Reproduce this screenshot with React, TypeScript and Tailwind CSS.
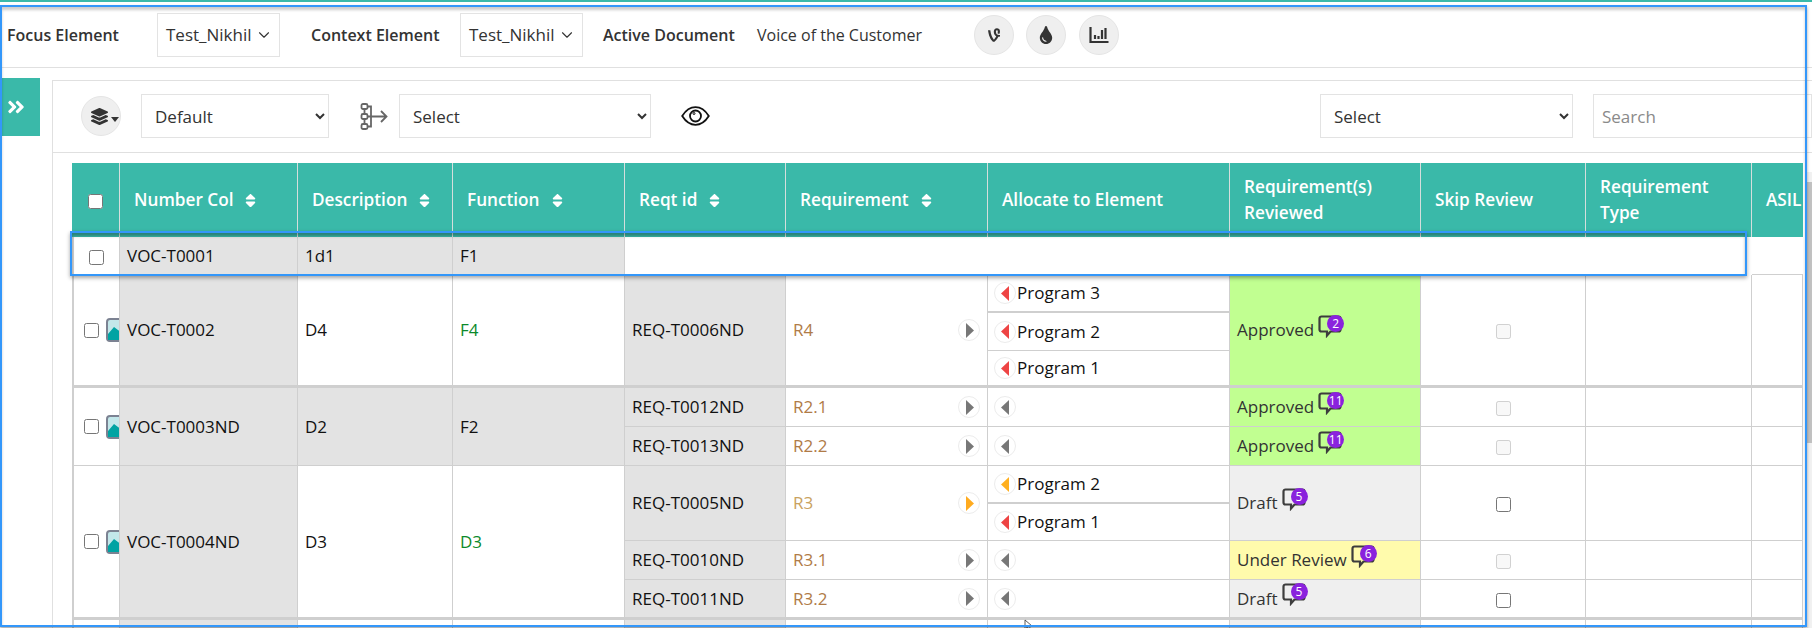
import { FaVine, FaTint, FaLayerGroup, FaAngleDoubleRight, FaSort } from 'react-icons/fa'
import { FiChevronDown } from 'react-icons/fi'
import type { ReactNode } from 'react'

const line = 'border-r border-b border-[#cfcfcf]'

function CircleBtn({ children }: { children: ReactNode }) {
  return (
    <div className="w-10 h-10 rounded-full bg-[#efefef] border border-[#e5e5e5] flex items-center justify-center text-[#333]">
      {children}
    </div>
  )
}

function ElementBox() {
  return (
    <div className="w-[123px] h-[44px] border border-[#e3e3e3] flex items-center pl-[8px] text-[17px] text-[#333] shrink-0">
      Test_Nikhil
      <FiChevronDown className="ml-[3px] text-[#333]" size={18} strokeWidth={1.5} />
    </div>
  )
}

function Bubble({ n }: { n: number }) {
  return (
    <span className="relative inline-block w-[28px] h-[23px] ml-[4px] -mt-[8px] shrink-0">
      <svg width="25" height="23" viewBox="0 0 25 23" fill="none" className="text-[#3d3d3d]">
        <path d="M3.500 1.500h17a2 2 0 0 1 2 2v11a2 2 0 0 1-2 2h-8l-3.500 4v-4h-5.500a2 2 0 0 1-2-2v-11a2 2 0 0 1 2-2z" stroke="currentColor" strokeWidth="2.200" />
      </svg>
      <span className="absolute left-[9px] top-0 w-[17px] h-[17px] rounded-full bg-[#8a22dd] text-white text-[12px] leading-[17px] text-center">
        {n}
      </span>
    </span>
  )
}

function Arrow({ dir, color }: { dir: 'left' | 'right'; color: string }) {
  return (
    <span className="w-[22px] h-[22px] rounded-full border border-[#ececec] bg-white flex items-center justify-center shrink-0">
      <svg width="9" height="15" viewBox="0 0 9 15">
        <polygon points={dir === 'left' ? '8,0 8,15 0,7.500' : '1,0 1,15 9,7.500'} fill={color} />
      </svg>
    </span>
  )
}

function ImageIcon() {
  return (
    <svg width="24" height="24" viewBox="0 0 24 24" className="shrink-0">
      <rect x="1" y="1" width="22" height="22" rx="3" fill="#c3e7ea" stroke="#7c8292" strokeWidth="2" />
      <polygon points="2,21 2,16 8,9 16,15 22,15 22,22 2,22" fill="#00a3a3" />
    </svg>
  )
}

function HeadCell({ children, sort, last }: { children: ReactNode; sort?: boolean; last?: boolean }) {
  return (
    <th className={`h-[74px] px-[14px] py-0 text-left align-middle font-semibold text-[17.200px] leading-[26px] text-white ${last ? '' : 'border-r border-[#d5dedc]'}`}>
      <span className="flex items-center whitespace-pre-line">
        {children}
        {sort && <FaSort className="ml-[9px] shrink-0" size={17} />}
      </span>
    </th>
  )
}

function Td({ children, bg, span, className = '' }: { children?: ReactNode; bg?: string; span?: number; className?: string }) {
  return (
    <td rowSpan={span} className={`${line} ${bg ?? 'bg-white'} px-[7px] py-0 align-middle ${className}`}>
      {children}
    </td>
  )
}

function Pick({ span, className = '' }: { span?: number; className?: string }) {
  return (
    <td rowSpan={span} className={`${line} border-l-2 overflow-hidden p-0 bg-white ${className}`}>
      <div className="flex items-center pl-[10px] gap-[7px] w-[60px]">
        <input type="checkbox" readOnly className="w-[15px] h-[15px] shrink-0" />
        <ImageIcon />
      </div>
    </td>
  )
}

function Program({ name, color, h, rule }: { name: string; color: string; h: string; rule?: string }) {
  return (
    <div className={`${h} ${rule ?? ''} flex items-center pl-[6px] text-[17px] text-[#111]`}>
      <Arrow dir="left" color={color} />
      <span className="ml-[1px]">{name}</span>
    </div>
  )
}

function Review({ label, n, bg, className = '' }: { label: string; n: number; bg: string; className?: string }) {
  return (
    <td className={`${line} ${bg} px-[7px] py-0 align-middle text-[#333] ${className}`}>
      <span className="flex items-center">
        {label}
        <Bubble n={n} />
      </span>
    </td>
  )
}

function ReqName({ name, color = 'text-[#b07b47]', arrow = '#777777', className = '' }: { name: string; color?: string; arrow?: string; className?: string }) {
  return (
    <td className={`${line} bg-white pl-[7px] pr-[7px] py-0 align-middle ${className}`}>
      <span className="flex items-center justify-between">
        <span className={color}>{name}</span>
        <Arrow dir="right" color={arrow} />
      </span>
    </td>
  )
}

function Skip({ disabled, className = '' }: { disabled?: boolean; className?: string }) {
  return (
    <td className={`${line} bg-white p-0 text-center align-middle ${className}`}>
      <input type="checkbox" disabled={disabled} readOnly className="w-[15px] h-[15px] align-middle" />
    </td>
  )
}

function EmptyAlloc({ className = '' }: { className?: string }) {
  return (
    <td className={`${line} bg-white py-0 pl-[6px] align-middle ${className}`}>
      <Arrow dir="left" color="#777777" />
    </td>
  )
}

const grey = 'bg-[#e3e3e3]'

export default function App() {
  return (
    <div className="relative w-[1812px] h-[628px] overflow-hidden bg-white font-['Open_Sans',sans-serif] text-[17px] text-[#111]">
      <div className="h-[2px] bg-[#3ab9a9]" />
      <div className="h-[5px]" />

      <div className="h-[61px] pb-[5px] border-b border-[#e0e0e0] flex items-center">
        <div className="w-[157px] pl-[7px] text-[16px] font-semibold text-[#333] shrink-0">Focus Element</div>
        <ElementBox />
        <div className="w-[150px] ml-[31px] -mr-[1px] text-[16px] font-semibold text-[#333] shrink-0">Context Element</div>
        <ElementBox />
        <div className="w-[154px] ml-[20px] text-[16px] font-semibold text-[#333] shrink-0">Active Document</div>
        <div className="w-[217px] text-[16px] text-[#333] shrink-0">Voice of the Customer</div>
        <CircleBtn><FaVine size={16} /></CircleBtn>
        <div className="w-3" />
        <CircleBtn><FaTint size={18} /></CircleBtn>
        <div className="w-[13px]" />
        <CircleBtn>
          <svg width="20" height="18" viewBox="0 0 20 18" fill="none" stroke="#333">
            <path d="M1.500 1v15h18" strokeWidth="2.200" />
            <path d="M6 13V9M9.500 13V10M13 13V4M16.500 13V2" strokeWidth="2.200" />
          </svg>
        </CircleBtn>
      </div>

      <div className="flex">
        <div className="w-[38px] h-[58px] mt-[10px] ml-[2px] bg-[#3ab9a9] flex items-center justify-start pl-[4px] text-white shrink-0">
          <FaAngleDoubleRight size={20} />
        </div>
        <div className="ml-[12px] mt-[12px] w-[1760px] border-l border-t border-[#e0e0e0] shrink-0">
          <div className="h-[72px] pb-[1px] border-b border-[#e0e0e0] flex items-center pl-[28px] text-[#333]">
            <div className="relative w-10 h-10 rounded-full bg-[#efefef] border border-[#e5e5e5] flex items-center justify-center shrink-0">
              <FaLayerGroup size={17} className="-ml-[3px]" />
              <svg width="8" height="5" viewBox="0 0 8 5" className="absolute right-[1px] top-[20px]">
                <polygon points="0,0 8,0 4,5" fill="#333" />
              </svg>
            </div>
            <select className="ml-[20px] w-[188px] h-[44px] border border-[#e3e3e3] bg-white pl-[9px] text-[17px] text-[#333] shrink-0">
              <option>Default</option>
            </select>
            <svg width="28" height="27" viewBox="0 0 28 27" fill="none" stroke="#666" strokeWidth="1.800" className="ml-[31px] shrink-0">
              <rect x="1.500" y="1" width="6" height="5" rx="1.500" />
              <rect x="1.500" y="11" width="6" height="5" rx="1.500" />
              <rect x="1.500" y="21" width="6" height="5" rx="1.500" />
              <path d="M4.500 6v5M4.500 16v5M7.500 13.500H26.500M21 8l5.500 5.500L21 19M7.500 3.500h3.500v20H7.500" />
            </svg>
            <select className="ml-[11px] w-[252px] h-[44px] border border-[#e3e3e3] bg-white pl-[9px] text-[17px] text-[#333] shrink-0">
              <option>Select</option>
            </select>
            <svg width="29" height="20" viewBox="0 0 29 20" fill="none" stroke="#111" strokeWidth="1.800" className="ml-[30px] shrink-0">
              <path d="M1.200 10C5 4 9.500 1.200 14.500 1.200S24 4 27.800 10C24 16 19.500 18.800 14.500 18.800S5 16 1.200 10z" />
              <circle cx="14.500" cy="10" r="5.500" />
              <circle cx="13" cy="7.500" r="1" strokeWidth="1" />
            </svg>
            <select className="ml-auto w-[253px] h-[44px] border border-[#e3e3e3] bg-white pl-[9px] text-[17px] text-[#333] shrink-0">
              <option>Select</option>
            </select>
            <input placeholder="Search" className="ml-[20px] w-[219px] h-[44px] border border-[#e3e3e3] pl-[8px] text-[17px] placeholder:text-[#8a8a8a] shrink-0" />
          </div>

          <div className="pt-[10px] pl-[19px]">
            <table className="table-fixed w-[1731px] border-separate border-spacing-0 text-[#111]">
              <colgroup>
                <col className="w-[48px]" />
                <col className="w-[178px]" />
                <col className="w-[155px]" />
                <col className="w-[172px]" />
                <col className="w-[161px]" />
                <col className="w-[202px]" />
                <col className="w-[242px]" />
                <col className="w-[191px]" />
                <col className="w-[165px]" />
                <col className="w-[166px]" />
                <col className="w-[51px]" />
              </colgroup>
              <thead className="bg-[#3ab9a9]">
                <tr>
                  <th className="h-[74px] border-r border-[#d5dedc] p-0 text-center align-middle">
                    <input type="checkbox" readOnly className="w-[15px] h-[15px] align-middle" />
                  </th>
                  <HeadCell sort>Number Col</HeadCell>
                  <HeadCell sort>Description</HeadCell>
                  <HeadCell sort>Function</HeadCell>
                  <HeadCell sort>Reqt id</HeadCell>
                  <HeadCell sort>Requirement</HeadCell>
                  <HeadCell>Allocate to Element</HeadCell>
                  <HeadCell>Requirement(s){'\n'}Reviewed</HeadCell>
                  <HeadCell>Skip Review</HeadCell>
                  <HeadCell>Requirement{'\n'}Type</HeadCell>
                  <HeadCell last>ASIL</HeadCell>
                </tr>
              </thead>
              <tbody>
                <tr className="h-[38px]">
                  <td className="border-b border-r border-l-2 border-[#cfcfcf] bg-white p-0 text-center align-middle">
                    <input type="checkbox" readOnly className="w-[15px] h-[15px] align-middle" />
                  </td>
                  <Td bg={grey}>VOC-T0001</Td>
                  <Td bg={grey}>1d1</Td>
                  <Td bg={grey}>F1</Td>
                  <td colSpan={6} className="bg-white" />
                  <td className="border-b border-[#cfcfcf] bg-white" />
                </tr>

                <tr className="h-[113px]">
                  <Pick className="border-b-[3px]" />
                  <Td bg={grey} className="border-b-[3px]">VOC-T0002</Td>
                  <Td className="border-b-[3px]">D4</Td>
                  <Td className="border-b-[3px] text-[#0b8a2b]">F4</Td>
                  <Td bg={grey} className="border-b-[3px]">REQ-T0006ND</Td>
                  <ReqName name="R4" className="border-b-[3px]" />
                  <td className={`${line} border-b-[3px] bg-white p-0 align-top`}>
                    <Program name="Program 3" color="#ee4444" h="h-[38px]" rule="border-b-2 border-[#cfcfcf]" />
                    <Program name="Program 2" color="#ee4444" h="h-[38px]" rule="border-b border-[#cfcfcf]" />
                    <Program name="Program 1" color="#ee4444" h="h-[34px]" />
                  </td>
                  <Review label="Approved" n={2} bg="bg-[#c1ff91]" className="border-b-[3px]" />
                  <Skip disabled className="border-b-[3px]" />
                  <Td className="border-b-[3px]" />
                  <Td className="border-b-[3px]" />
                </tr>

                <tr className="h-[39px]">
                  <Pick span={2} />
                  <Td bg={grey} span={2}>VOC-T0003ND</Td>
                  <Td bg={grey} span={2}>D2</Td>
                  <Td bg={grey} span={2}>F2</Td>
                  <Td bg={grey}>REQ-T0012ND</Td>
                  <ReqName name="R2.1" />
                  <EmptyAlloc />
                  <Review label="Approved" n={11} bg="bg-[#c1ff91]" />
                  <Skip disabled />
                  <Td />
                  <Td />
                </tr>
                <tr className="h-[39px]">
                  <Td bg={grey}>REQ-T0013ND</Td>
                  <ReqName name="R2.2" />
                  <EmptyAlloc />
                  <Review label="Approved" n={11} bg="bg-[#c1ff91]" />
                  <Skip disabled />
                  <Td />
                  <Td />
                </tr>

                <tr className="h-[75px]">
                  <Pick span={3} className="border-b-[3px]" />
                  <Td bg={grey} span={3} className="border-b-[3px]">VOC-T0004ND</Td>
                  <Td span={3} className="border-b-[3px]">D3</Td>
                  <Td span={3} className="border-b-[3px] text-[#0b8a2b]">D3</Td>
                  <Td bg={grey}>REQ-T0005ND</Td>
                  <ReqName name="R3" color="text-[#c9a25f]" arrow="#ffab1f" />
                  <td className={`${line} bg-white p-0 align-top`}>
                    <Program name="Program 2" color="#ffb020" h="h-[38px]" rule="border-b-2 border-[#cfcfcf]" />
                    <Program name="Program 1" color="#ee4444" h="h-[36px]" />
                  </td>
                  <Review label="Draft" n={5} bg="bg-[#efefef]" />
                  <Skip />
                  <Td />
                  <Td />
                </tr>
                <tr className="h-[39px]">
                  <Td bg={grey}>REQ-T0010ND</Td>
                  <ReqName name="R3.1" />
                  <EmptyAlloc />
                  <Review label="Under Review" n={6} bg="bg-[#fffbac]" />
                  <Skip disabled />
                  <Td />
                  <Td />
                </tr>
                <tr className="h-[40px]">
                  <Td bg={grey} className="border-b-[3px]">REQ-T0011ND</Td>
                  <ReqName name="R3.2" className="border-b-[3px]" />
                  <EmptyAlloc className="border-b-[3px]" />
                  <Review label="Draft" n={5} bg="bg-[#efefef]" className="border-b-[3px]" />
                  <Skip className="border-b-[3px]" />
                  <Td className="border-b-[3px]" />
                  <Td className="border-b-[3px]" />
                </tr>

                <tr className="h-[30px]">
                  <td className={`${line} border-l-2 bg-white`} />
                  <Td bg={grey} />
                  <Td />
                  <Td />
                  <Td bg={grey} />
                  <Td />
                  <Td />
                  <Td bg="bg-[#efefef]" />
                  <Td />
                  <Td />
                  <Td />
                </tr>
              </tbody>
            </table>
          </div>
        </div>
      </div>

      {/* scrollbar at the window edge */}
      <div className="absolute right-0 top-[172px] bottom-0 w-[5px] bg-[#f1f1f1]">
        <div className="mt-[10px] h-[261px] bg-[#c1c1c1]" />
      </div>

      {/* mouse pointer */}
      <svg width="10" height="12" viewBox="0 0 10 12" className="absolute left-[1024px] top-[619px]">
        <path d="M1 1v9l2.500-2 2 3.500 1.500-1-2-3.500H8z" fill="#fff" stroke="#333" strokeWidth="0.800" />
      </svg>

      {/* highlight rectangles drawn over the capture */}
      <div className="absolute left-[70px] top-[231px] w-[1677px] h-[45px] border-2 border-[#3397fa] shadow-[0_2px_4px_rgba(0,0,0,0.35),inset_0_3px_3px_rgba(0,0,0,0.3)] pointer-events-none" />
      <div className="absolute left-0 top-[5px] w-[1807px] h-[622px] border-2 border-[#3397fa] shadow-[0_2px_3px_rgba(0,0,0,0.35),inset_0_3px_3px_rgba(0,0,0,0.2)] pointer-events-none" />
    </div>
  )
}
